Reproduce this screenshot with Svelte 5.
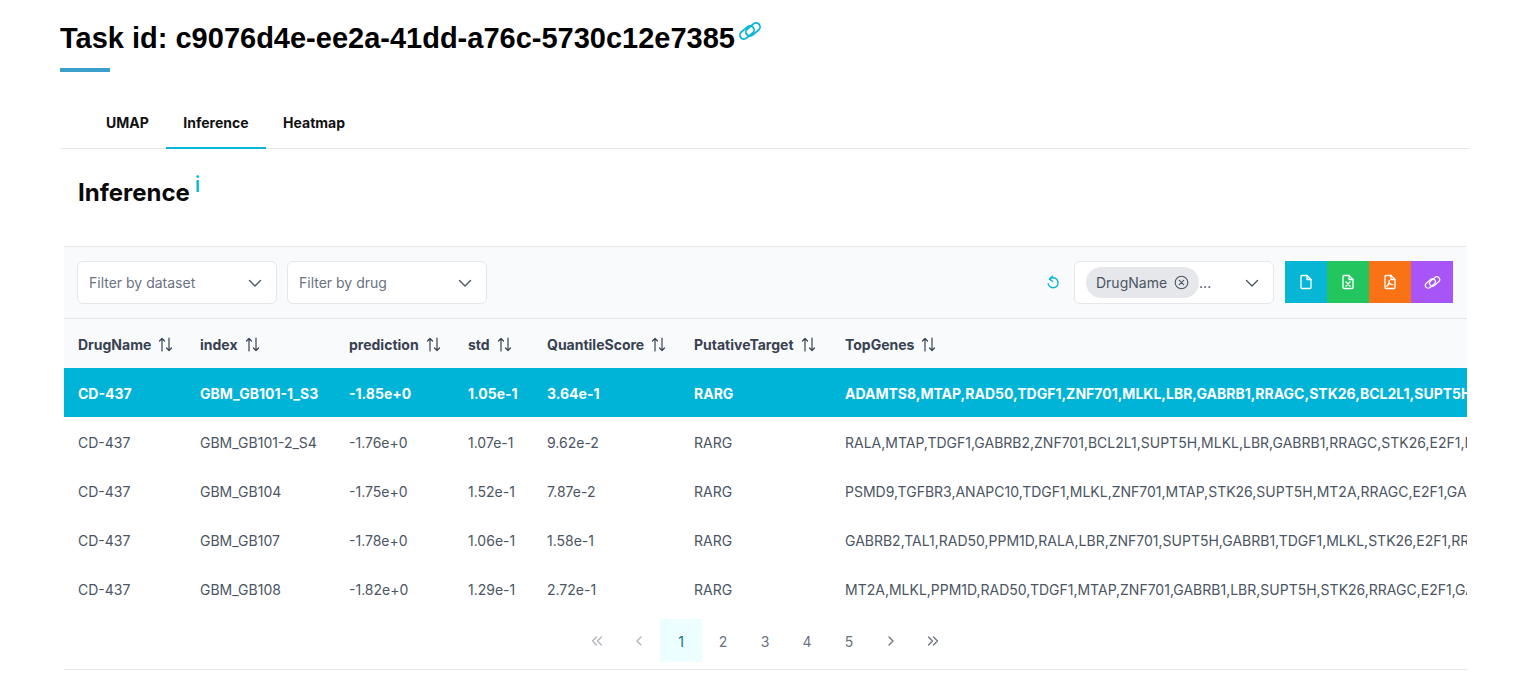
<script lang="ts">
	const columns = ['DrugName', 'index', 'prediction', 'std', 'QuantileScore', 'PutativeTarget', 'TopGenes'];

	const rows = [
		['CD-437', 'GBM_GB101-1_S3', '-1.85e+0', '1.05e-1', '3.64e-1', 'RARG', 'ADAMTS8,MTAP,RAD50,TDGF1,ZNF701,MLKL,LBR,GABRB1,RRAGC,STK26,BCL2L1,SUPT5H,E2F1,MT2A'],
		['CD-437', 'GBM_GB101-2_S4', '-1.76e+0', '1.07e-1', '9.62e-2', 'RARG', 'RALA,MTAP,TDGF1,GABRB2,ZNF701,BCL2L1,SUPT5H,MLKL,LBR,GABRB1,RRAGC,STK26,E2F1,MT2A,RAD50'],
		['CD-437', 'GBM_GB104', '-1.75e+0', '1.52e-1', '7.87e-2', 'RARG', 'PSMD9,TGFBR3,ANAPC10,TDGF1,MLKL,ZNF701,MTAP,STK26,SUPT5H,MT2A,RRAGC,E2F1,GABRB1,LBR,RAD50'],
		['CD-437', 'GBM_GB107', '-1.78e+0', '1.06e-1', '1.58e-1', 'RARG', 'GABRB2,TAL1,RAD50,PPM1D,RALA,LBR,ZNF701,SUPT5H,GABRB1,TDGF1,MLKL,STK26,E2F1,RRAGC,MTAP'],
		['CD-437', 'GBM_GB108', '-1.82e+0', '1.29e-1', '2.72e-1', 'RARG', 'MT2A,MLKL,PPM1D,RAD50,TDGF1,MTAP,ZNF701,GABRB1,LBR,SUPT5H,STK26,RRAGC,E2F1,GABRB2,RALA']
	];

	const tabs = ['UMAP', 'Inference', 'Heatmap'];
	const pages = [1, 2, 3, 4, 5];
</script>

{#snippet link(size)}
	<svg width={size} height={size} viewBox="0 0 24 24" fill="none" stroke="currentColor" stroke-width="1.800">
		<rect x="1" y="9.500" width="16" height="8" rx="4" transform="rotate(-40 9 13.500)" />
		<rect x="7" y="6.500" width="16" height="8" rx="4" transform="rotate(-40 15 10.500)" />
	</svg>
{/snippet}

{#snippet chevron()}
	<svg width="14" height="14" viewBox="0 0 14 14" fill="none" stroke="currentColor" stroke-width="1.400" stroke-linecap="round" stroke-linejoin="round">
		<path d="M1.500 4.500 7 10l5.500-5.500" />
	</svg>
{/snippet}

{#snippet sort()}
	<svg class="sort" width="15" height="15" viewBox="0 0 15 15" fill="none" stroke="currentColor" stroke-width="1.200" stroke-linecap="round" stroke-linejoin="round">
		<path d="M4 14V1.500M1.500 4 4 1.500 6.500 4" />
		<path d="M11 1v12.500M8.500 11l2.500 2.500 2.500-2.500" />
	</svg>
{/snippet}

{#snippet file(kind)}
	<svg width="16" height="16" viewBox="0 0 16 16" fill="none" stroke="currentColor" stroke-width="1.300" stroke-linecap="round" stroke-linejoin="round">
		<path d="M3 2.500a1 1 0 0 1 1-1h5l4 4v8a1 1 0 0 1-1 1H4a1 1 0 0 1-1-1z" />
		<path d="M9 1.500v4h4" />
		{#if kind === 'xls'}
			<path d="M6 8l4 4M10 8l-4 4" stroke-width="1.500" />
		{:else if kind === 'pdf'}
			<path d="M7.200 6.500c.3 2.500-1 4.800-2.400 5.800M7.500 9.500c1 .9 2.200 1.300 3.600 1.200" />
		{/if}
	</svg>
{/snippet}

<main class="page">
	<div class="title-row">
		<h1>Task id: c9076d4e-ee2a-41dd-a76c-5730c12e7385</h1>
		<span class="title-link">{@render link(24)}</span>
	</div>
	<div class="title-bar"></div>

	<nav class="tabs">
		{#each tabs as tab}
			<button class="tab" class:active={tab === 'Inference'}>{tab}</button>
		{/each}
	</nav>

	<div class="section-head">
		<h2>Inference</h2>
		<span class="info">i</span>
	</div>

	<section class="card">
		<div class="toolbar">
			<div class="select">
				<span>Filter by dataset</span>
				{@render chevron()}
			</div>
			<div class="select">
				<span>Filter by drug</span>
				{@render chevron()}
			</div>
			<div class="spacer"></div>
			<svg class="reset" width="16" height="16" viewBox="0 0 16 16" fill="none" stroke="currentColor" stroke-width="1.400" stroke-linecap="round" stroke-linejoin="round">
				<path d="M4.600 4.200A5 5 0 1 1 3.200 8.800" />
				<path d="M7.500 1.300 4.400 4.100 7.500 6.300" />
			</svg>
			<div class="select columns-select">
				<span class="chip">
					DrugName
					<svg width="15" height="15" viewBox="0 0 15 15" fill="none" stroke="currentColor" stroke-width="1.100" stroke-linecap="round">
						<circle cx="7.500" cy="7.500" r="6.300" />
						<path d="M5.300 5.300l4.400 4.400M9.700 5.300l-4.400 4.400" />
					</svg>
				</span>
				<span class="more">...</span>
				{@render chevron()}
			</div>
			<div class="actions">
				<button class="action cyan">{@render file('csv')}</button>
				<button class="action green">{@render file('xls')}</button>
				<button class="action orange">{@render file('pdf')}</button>
				<button class="action purple">{@render link(17)}</button>
			</div>
		</div>

		<div class="table">
			<div class="row header">
				{#each columns as col}
					<div class="cell"><span>{col}</span>{@render sort()}</div>
				{/each}
			</div>
			{#each rows as row, i}
				<div class="row" class:selected={i === 0}>
					{#each row as value}
						<div class="cell">{value}</div>
					{/each}
				</div>
			{/each}
		</div>

		<div class="pager">
			<button class="page-btn muted">
				<svg width="14" height="14" viewBox="0 0 14 14" fill="none" stroke="currentColor" stroke-width="1.300" stroke-linecap="round" stroke-linejoin="round"><path d="M6.500 3 2.500 7l4 4M11.500 3l-4 4 4 4" /></svg>
			</button>
			<button class="page-btn muted">
				<svg width="14" height="14" viewBox="0 0 14 14" fill="none" stroke="currentColor" stroke-width="1.300" stroke-linecap="round" stroke-linejoin="round"><path d="M9 3 5 7l4 4" /></svg>
			</button>
			{#each pages as p}
				<button class="page-btn" class:current={p === 1}>{p}</button>
			{/each}
			<button class="page-btn">
				<svg width="14" height="14" viewBox="0 0 14 14" fill="none" stroke="currentColor" stroke-width="1.300" stroke-linecap="round" stroke-linejoin="round"><path d="M5 3l4 4-4 4" /></svg>
			</button>
			<button class="page-btn">
				<svg width="14" height="14" viewBox="0 0 14 14" fill="none" stroke="currentColor" stroke-width="1.300" stroke-linecap="round" stroke-linejoin="round"><path d="M2.500 3l4 4-4 4M7.500 3l4 4-4 4" /></svg>
			</button>
		</div>
	</section>
</main>

<style>
	:global(body) {
		background: #fff;
		font-family: Inter, 'Noto Sans', sans-serif;
		color: #111827;
	}

	.page {
		width: 1410px;
		height: 679px;
		margin-left: 60px;
		padding-top: 16px;
		box-sizing: border-box;
		overflow: hidden;
	}

	.title-row {
		display: flex;
		align-items: flex-start;
		height: 44px;
	}

	h1 {
		margin: 0;
		font: 700 29px/44px 'Liberation Sans', Arial, sans-serif;
		color: #000;
	}

	.title-link {
		display: block;
		margin: 3px 0 0 3px;
		color: #06b6d4;
	}

	.title-bar {
		width: 50px;
		height: 4px;
		margin-top: 8px;
		background: #3b9fcb;
	}

	.tabs {
		display: flex;
		gap: 0.500px;
		height: 77px;
		padding-left: 29px;
		align-items: flex-end;
		border-bottom: 1px solid #e5e7eb;
		box-sizing: border-box;
	}

	.tab {
		height: 50px;
		padding: 0 17px 2px;
		border: 0;
		border-bottom: 2px solid transparent;
		margin-bottom: -1px;
		background: none;
		font: 700 14px Inter, sans-serif;
		color: #111;
	}

	.tab.active {
		border-bottom-color: #06b6d4;
	}

	.section-head {
		display: flex;
		align-items: flex-start;
		height: 97px;
		padding: 26px 0 0 18px;
		box-sizing: border-box;
	}

	h2 {
		margin: 0;
		font: 700 24px/36px Inter, sans-serif;
		color: #0a0a0a;
	}

	.info {
		margin: -3px 0 0 5px;
		font: 500 22px/24px Inter, sans-serif;
		color: #06b6d4;
	}

	.card {
		width: 1403px;
		margin-left: 4px;
	}

	.toolbar {
		display: flex;
		align-items: center;
		height: 73px;
		padding: 0 14px 0 13px;
		gap: 10px;
		background: #f9fafb;
		border-top: 1px solid #e5e7eb;
		border-bottom: 1px solid #e5e7eb;
		box-sizing: border-box;
	}

	.spacer {
		flex: 1;
	}

	.select {
		display: flex;
		align-items: center;
		justify-content: space-between;
		width: 200px;
		height: 43px;
		padding: 0 14px 0 11px;
		background: #fff;
		border: 1px solid #e5e7eb;
		border-radius: 6px;
		box-sizing: border-box;
		font-size: 14px;
		color: #6b7280;
		flex: none;
	}

	.select svg {
		color: #4b5563;
	}

	.reset {
		color: #06b6d4;
		margin-right: 3px;
		flex: none;
	}

	.columns-select {
		justify-content: flex-start;
		padding-left: 11px;
	}

	.chip {
		display: flex;
		align-items: center;
		gap: 7px;
		height: 31px;
		padding: 0 10px;
		background: #e5e7eb;
		border-radius: 16px;
		color: #4b5563;
		box-sizing: border-box;
	}

	.more {
		flex: 1;
		color: #374151;
		line-height: 1;
	}

	.actions {
		display: flex;
		flex: none;
		margin: -1px 0 0 1px;
	}

	.action {
		display: flex;
		align-items: center;
		justify-content: center;
		width: 42px;
		height: 42px;
		padding: 0;
		border: 0;
		color: #fff;
	}

	.cyan { background: #06b6d4; }
	.green { background: #22c55e; }
	.orange { background: #f97316; }
	.purple { background: #a855f7; }

	.table {
		overflow: hidden;
	}

	.row {
		display: grid;
		grid-template-columns: 122px 149px 119px 79px 147px 151px 1fr;
		height: 49px;
		font-size: 14px;
		color: #4b5563;
		background: #fff;
	}

	.row.header {
		background: #f9fafb;
		font-weight: 700;
		color: #374151;
	}

	.row.selected {
		background: #00b4d8;
		color: #fff;
		font-weight: 700;
	}

	.cell {
		display: flex;
		align-items: center;
		padding: 1px 0 0 14px;
		white-space: nowrap;
		overflow: hidden;
		min-width: 0;
	}

	.sort {
		margin-left: 7px;
		flex: none;
	}

	.pager {
		display: flex;
		justify-content: center;
		height: 57px;
		padding: 6px 1px 0 0;
		border-bottom: 1px solid #e5e7eb;
		box-sizing: border-box;
	}

	.page-btn {
		display: flex;
		align-items: center;
		justify-content: center;
		width: 42px;
		height: 43px;
		padding: 1px 0 0;
		border: 0;
		background: none;
		font: 400 14px Inter, sans-serif;
		color: #6b7280;
	}

	.page-btn.muted {
		color: #b0b5bd;
	}

	.page-btn.current {
		background: #ecfeff;
		color: #0e7490;
	}
</style>
